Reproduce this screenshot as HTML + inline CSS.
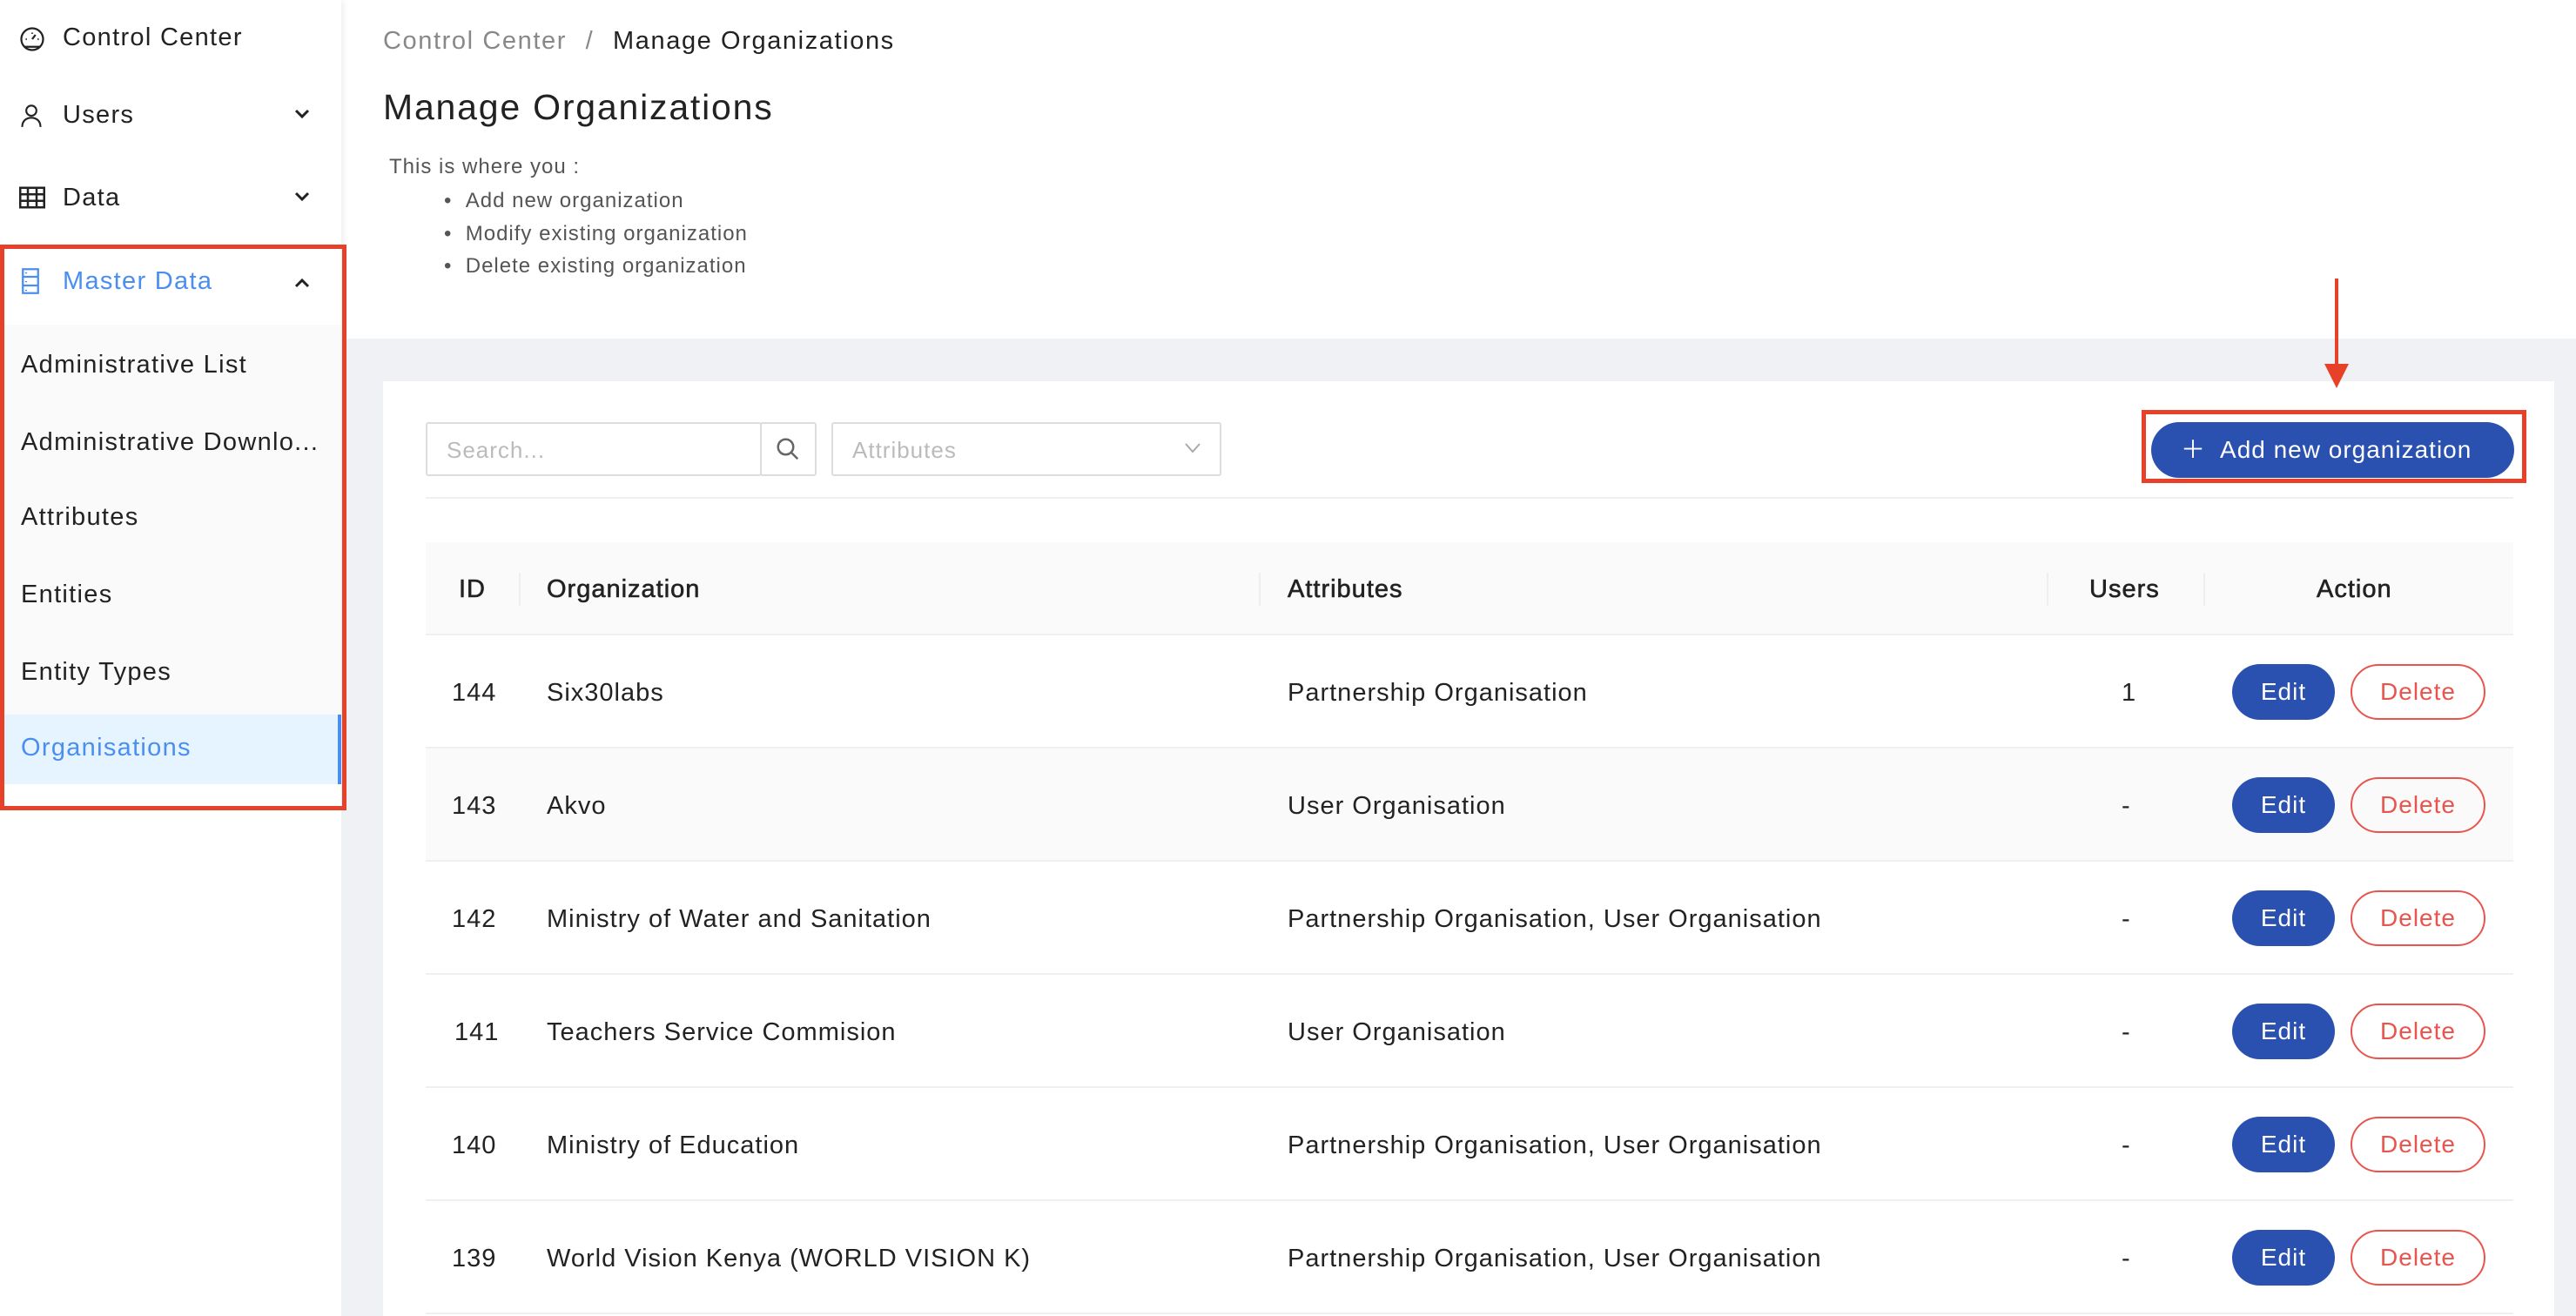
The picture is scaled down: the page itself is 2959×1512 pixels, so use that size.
<!DOCTYPE html><html><head><meta charset="utf-8"><style>
*{margin:0;padding:0;box-sizing:border-box}
body{width:2959px;height:1512px;overflow:hidden;background:#fff;font-family:"Liberation Sans",sans-serif;color:#222;position:relative;letter-spacing:1px}
.a{position:absolute;white-space:nowrap}
.side{position:absolute;left:0;top:0;width:392px;height:1512px;background:#fff;box-shadow:2px 0 8px rgba(0,0,0,.08)}
.it{position:absolute;left:24px;font-size:29px;line-height:40px;letter-spacing:1.3px}
.row{position:absolute;left:489px;width:2398px;height:130px;border-bottom:2px solid #f0f0f0;font-size:29px}
.row span{position:absolute;top:50px}
.edit{position:absolute;left:2075px;top:33px;width:118px;height:64px;border-radius:32px;background:#2a50b0;color:#fff;font-size:28px;text-align:center;line-height:64px}
.del{position:absolute;left:2211px;top:33px;width:155px;height:64px;border-radius:32px;border:2px solid #e8554e;color:#e8554e;font-size:28px;text-align:center;line-height:60px}
.hd{position:absolute;top:38px;-webkit-text-stroke:0.6px #222}
</style></head><body>
<div class="side">
<svg class="a" style="left:22px;top:30px" width="30" height="30" viewBox="0 0 24 24" fill="none" stroke="#222" stroke-width="1.8"><circle cx="12" cy="12" r="10"/><path d="M12 12l3-4M6 12h1M17 12h1M12 6v1M5 19h14"/></svg>
<div class="it" style="top:23px;left:72px">Control Center</div>
<svg class="a" style="left:22px;top:118px" width="28" height="30" viewBox="0 0 24 24" fill="none" stroke="#222" stroke-width="1.8"><circle cx="12" cy="7" r="5"/><path d="M3 23c0-6 4-9 9-9s9 3 9 9"/></svg>
<div class="it" style="top:112px;left:72px">Users</div>
<svg class="a" style="left:337px;top:124px" width="20" height="14" viewBox="0 0 20 14" fill="none" stroke="#222" stroke-width="3"><path d="M3 3l7 7 7-7"/></svg>
<svg class="a" style="left:22px;top:214px" width="30" height="26" viewBox="0 0 24 20" fill="none" stroke="#222" stroke-width="2"><rect x="1" y="1" width="22" height="18"/><path d="M1 7h22M1 13h22M8 1v18M16 1v18"/></svg>
<div class="it" style="top:207px;left:72px">Data</div>
<svg class="a" style="left:337px;top:219px" width="20" height="14" viewBox="0 0 20 14" fill="none" stroke="#222" stroke-width="3"><path d="M3 3l7 7 7-7"/></svg>
<svg class="a" style="left:24px;top:308px" width="22" height="30" viewBox="0 0 16 24" fill="none" stroke="#4a8ef0" stroke-width="1.8"><rect x="1" y="1" width="14" height="22"/><path d="M1 8h14M1 16h14M4 4v1M4 12v1M4 20v1"/></svg>
<div class="it" style="top:303px;left:72px;color:#4a8ef0">Master Data</div>
<svg class="a" style="left:337px;top:318px" width="20" height="14" viewBox="0 0 20 14" fill="none" stroke="#222" stroke-width="3"><path d="M3 11l7-7 7 7"/></svg>
<div class="a" style="left:0;top:373px;width:392px;height:448px;background:#fafafa"></div>
<div class="it" style="top:399px">Administrative List</div>
<div class="it" style="top:488px">Administrative Downlo...</div>
<div class="it" style="top:574px">Attributes</div>
<div class="it" style="top:663px">Entities</div>
<div class="it" style="top:752px">Entity Types</div>
<div class="a" style="left:0;top:821px;width:392px;height:80px;background:#e6f4ff;border-right:4px solid #4a8ef0"></div>
<div class="it" style="top:839px;color:#4a8ef0">Organisations</div>
</div>

<div class="a" style="left:440px;top:31px;font-size:29px;color:#888;letter-spacing:1.6px">Control Center <span style="margin:0 12px">/</span> <span style="color:#222">Manage Organizations</span></div>
<div class="a" style="left:440px;top:100px;font-size:41px;color:#222;letter-spacing:1.8px">Manage Organizations</div>
<div class="a" style="left:447px;top:178px;font-size:24px;color:#555">This is where you :</div>
<div class="a" style="left:510px;top:212px;font-size:24px;color:#555;line-height:37.5px">• &nbsp;Add new organization<br>• &nbsp;Modify existing organization<br>• &nbsp;Delete existing organization</div>

<div class="a" style="left:392px;top:389px;width:2567px;height:1123px;background:#f0f1f5"></div>
<div class="a" style="left:440px;top:438px;width:2494px;height:1074px;background:#fff"></div>
<div class="a" style="left:489px;top:485px;width:386px;height:62px;border:2px solid #ddd;border-radius:3px;font-size:26px;color:#bbb;padding:15px 22px">Search...</div>
<div class="a" style="left:873px;top:485px;width:65px;height:62px;border:2px solid #ddd;border-radius:3px"></div>
<svg class="a" style="left:890px;top:501px" width="30" height="30" viewBox="0 0 24 24" fill="none" stroke="#666" stroke-width="2"><circle cx="10" cy="10" r="7"/><path d="M15 15l6 6"/></svg>
<div class="a" style="left:955px;top:485px;width:448px;height:62px;border:2px solid #ddd;border-radius:3px;font-size:26px;color:#bbb;padding:15px 22px">Attributes</div>
<svg class="a" style="left:1360px;top:508px" width="20" height="14" viewBox="0 0 20 14" fill="none" stroke="#aaa" stroke-width="2"><path d="M2 2l8 9 8-9"/></svg>
<div class="a" style="left:489px;top:571px;width:2398px;height:2px;background:#f0f0f0"></div>

<div class="a" style="left:2682px;top:320px;width:4px;height:100px;background:#e8412a"></div>
<div class="a" style="left:2670px;top:418px;width:0;height:0;border-left:14px solid transparent;border-right:14px solid transparent;border-top:28px solid #e8412a"></div>
<div class="a" style="left:2460px;top:471px;width:442px;height:84px;border:5px solid #e8412a"></div>
<div class="a" style="left:2471px;top:485px;width:417px;height:64px;border-radius:32px;background:#2a50b0;color:#fff;font-size:28px;line-height:64px;padding-left:34px">＋&nbsp; Add new organization</div>

<div class="a" style="left:489px;top:623px;width:2398px;height:107px;background:#fafafa;border-bottom:2px solid #f0f0f0;font-size:29px;color:#222">
<span class="hd" style="left:38px">ID</span>
<div class="a" style="left:107px;top:35px;width:2px;height:38px;background:#eee"></div>
<span class="hd" style="left:139px">Organization</span>
<div class="a" style="left:957px;top:35px;width:2px;height:38px;background:#eee"></div>
<span class="hd" style="left:990px">Attributes</span>
<div class="a" style="left:1862px;top:35px;width:2px;height:38px;background:#eee"></div>
<span class="hd" style="left:1911px">Users</span>
<div class="a" style="left:2042px;top:35px;width:2px;height:38px;background:#eee"></div>
<span class="hd" style="left:2172px">Action</span>
</div>

<div class="row" style="top:730px"><span style="left:30px">144</span><span style="left:139px">Six30labs</span><span style="left:990px">Partnership Organisation</span><span style="left:1948px">1</span><div class="edit">Edit</div><div class="del">Delete</div></div>
<div class="row" style="top:860px;background:#fafafa"><span style="left:30px">143</span><span style="left:139px">Akvo</span><span style="left:990px">User Organisation</span><span style="left:1948px">-</span><div class="edit">Edit</div><div class="del">Delete</div></div>
<div class="row" style="top:990px"><span style="left:30px">142</span><span style="left:139px">Ministry of Water and Sanitation</span><span style="left:990px">Partnership Organisation, User Organisation</span><span style="left:1948px">-</span><div class="edit">Edit</div><div class="del">Delete</div></div>
<div class="row" style="top:1120px"><span style="left:33px">141</span><span style="left:139px">Teachers Service Commision</span><span style="left:990px">User Organisation</span><span style="left:1948px">-</span><div class="edit">Edit</div><div class="del">Delete</div></div>
<div class="row" style="top:1250px"><span style="left:30px">140</span><span style="left:139px">Ministry of Education</span><span style="left:990px">Partnership Organisation, User Organisation</span><span style="left:1948px">-</span><div class="edit">Edit</div><div class="del">Delete</div></div>
<div class="row" style="top:1380px"><span style="left:30px">139</span><span style="left:139px">World Vision Kenya (WORLD VISION K)</span><span style="left:990px">Partnership Organisation, User Organisation</span><span style="left:1948px">-</span><div class="edit">Edit</div><div class="del">Delete</div></div>

<div class="a" style="left:0;top:281px;width:398px;height:650px;border:5px solid #e8412a"></div>
</body></html>
